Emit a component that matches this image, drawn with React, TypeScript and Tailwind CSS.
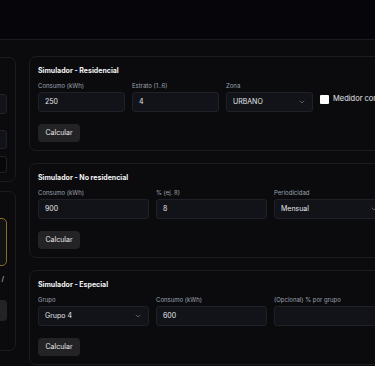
import { ChevronDown } from 'lucide-react';

const inputCls =
  'flex h-[20px] items-center rounded-[3px] border border-[#1e2127] bg-[#111318] px-[6px] text-[7px] text-[#e5e7eb]';
const labelCls = 'h-[8px] text-[6px] leading-[8px] text-[#9ca3af]';

function Field({ label, value, width, select }: { label: string; value: string; width: string; select?: boolean }) {
  return (
    <div className={`flex shrink-0 flex-col gap-[2px] ${width}`}>
      <div className={labelCls}>{label}</div>
      <div className={`${inputCls} justify-between`}>
        <span>{value}</span>
        {select ? <ChevronDown size={8} strokeWidth={1.5} className="text-[#9ca3af]" /> : null}
      </div>
    </div>
  );
}

function Card({ title, children }: { title: string; children: React.ReactNode }) {
  return (
    <section className="rounded-[7px] border border-[#1b1c20] bg-[#0b0b0e] px-[8px] pb-[8px] pt-[8px]">
      <h2 className="h-[11px] text-[7px] font-bold leading-[11px] text-[#f3f4f6]">{title}</h2>
      <div className="mt-[6px] flex gap-[7px]">{children}</div>
      <button
        type="button"
        className="mt-[12px] h-[18px] w-[42px] rounded-[4px] bg-[#232326] text-[7px] text-[#e5e7eb]"
      >
        Calcular
      </button>
    </section>
  );
}

export default function App() {
  return (
    <div
      className="h-[366px] w-[375px] overflow-hidden bg-[#0b0b0e]"
      style={{ fontFamily: 'Inter, "Noto Sans", sans-serif' }}
    >
      <header className="h-[40px] border-b border-[#1b1c20] bg-[#06060a]" />
      <main className="flex gap-[13px] pt-[16px]">
        {/* sidebar, scrolled mostly out of view */}
        <aside className="ml-[-184px] flex w-[200px] shrink-0 flex-col gap-[9px]">
          <div className="mt-[1px] flex h-[125px] flex-col rounded-[7px] border border-[#1b1c20] px-[8px] pt-[8px]">
            <div className="h-[11px]" />
            <div className="mt-[6px] h-[8px]" />
            <div className="mt-[3px] h-[20px] rounded-[3px] border border-[#1e2127] bg-[#111318]" />
            <div className="mt-[8px] h-[8px]" />
            <div className="h-[19px] rounded-[3px] border border-[#1e2127] bg-[#111318]" />
            <div className="mt-[7px] h-[17px] rounded-[3px] border border-[#1e2127] bg-[#08080b]" />
          </div>
          <div className="flex h-[160px] flex-col rounded-[7px] border border-[#1b1c20] px-[8px] pt-[8px]">
            <div className="h-[11px]" />
            <div className="mt-[7px] h-[48px] rounded-[5px] border border-[#8a6a26] bg-[#111111]" />
            <div className="mt-[8px] flex h-[10px] justify-end pr-[3px] text-[7px] leading-[10px] text-[#d1d5db]">
              /
            </div>
            <div className="mt-[16px] h-[21px] rounded-[4px] bg-[#232326]" />
          </div>
        </aside>

        <div className="flex w-[420px] shrink-0 flex-col gap-[12px]">
          <Card title="Simulador - Residencial">
            <Field label="Consumo (kWh)" value="250" width="w-[87px]" />
            <Field label="Estrato (1..6)" value="4" width="w-[87px]" />
            <Field label="Zona" value="URBANO" width="w-[87px]" select />
            <label className="mt-[4px] flex shrink-0 items-center gap-[4px] self-center text-[7.5px] text-[#e5e7eb]">
              <span className="h-[9px] w-[9px] rounded-[1px] bg-white" />
              Medidor comunitario
            </label>
          </Card>
          <Card title="Simulador - No residencial">
            <Field label="Consumo (kWh)" value="900" width="w-[111px]" />
            <Field label="% (ej. 8)" value="8" width="w-[111px]" />
            <Field label="Periodicidad" value="Mensual" width="w-[111px]" select />
          </Card>
          <Card title="Simulador - Especial">
            <Field label="Grupo" value="Grupo 4" width="w-[111px]" select />
            <Field label="Consumo (kWh)" value="600" width="w-[111px]" />
            <Field label="(Opcional) % por grupo" value="" width="w-[111px]" />
          </Card>
        </div>
      </main>
    </div>
  );
}
